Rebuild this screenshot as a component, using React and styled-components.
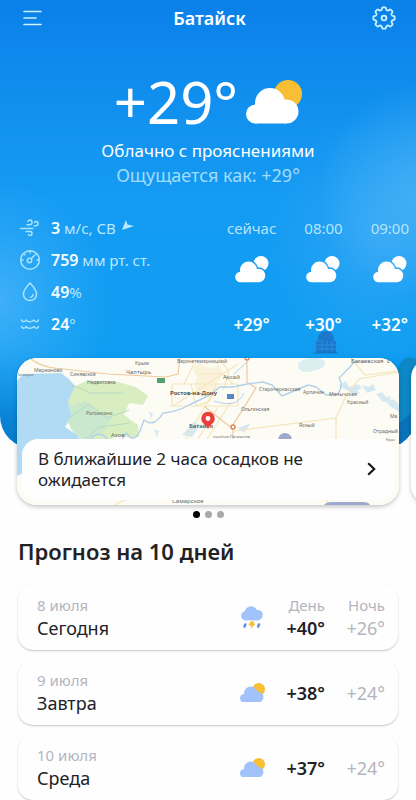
import React, { useState } from 'react'
import styled, { createGlobalStyle } from 'styled-components'

const GlobalStyle = createGlobalStyle`
  html {
    scrollbar-width: none;
  }

  body {
    margin: 0;
    background: #fefefe;
    font-family: 'Noto Sans', 'Open Sans', sans-serif;
    color: #222226;
  }

  *, *::before, *::after {
    box-sizing: border-box;
  }

  button {
    border: 0;
    padding: 0;
    background: none;
    font: inherit;
    color: inherit;
    cursor: pointer;
  }

  svg {
    display: block;
    flex: none;
  }
`

const Page = styled.main`
  overflow: hidden;
  padding-bottom: 16px;
`

const Hero = styled.section`
  position: relative;
  overflow: hidden;
  padding-bottom: 107px;
  border-radius: 0 0 32px 32px;
  color: #fff;
  background:
    radial-gradient(120px 110px at 105% 190px, rgba(110, 195, 248, 0.5), rgba(110, 195, 248, 0.25) 50%, rgba(110, 195, 248, 0)),
    radial-gradient(110px 130px at 90% 240px, rgba(90, 180, 248, 0.4), rgba(90, 180, 248, 0.12) 60%, rgba(90, 180, 248, 0)),
    radial-gradient(120px 120px at -2% 300px, rgba(100, 190, 252, 0.6), rgba(100, 190, 252, 0.25) 50%, rgba(100, 190, 252, 0)),
    linear-gradient(180deg, #0a80e9 0, #1191ef 110px, #149bf3 200px, #0f9ef2 350px, #0a93e6 375px, #0879c9 448px);
`

const Landscape = styled.svg`
  position: absolute;
  right: 0;
  bottom: 0;
`

const Header = styled.header`
  display: flex;
  align-items: center;
  justify-content: space-between;
  height: 36px;
  padding: 0 20px 0 23px;
`

const City = styled.h1`
  margin: 0;
  font-size: 18px;
  line-height: 24px;
  font-weight: 600;
`

const IconButton = styled.button`
  display: flex;
  justify-content: ${({ $end }) => ($end ? 'flex-end' : 'flex-start')};
  width: 24px;
`

const Current = styled.div`
  display: flex;
  flex-direction: column;
  align-items: center;
  padding-top: 32px;
`

const CurrentTemp = styled.div`
  display: flex;
  align-items: center;
  gap: 8px;
  font-size: 58px;
  line-height: 68px;
`

const Condition = styled.p`
  margin: 3px 0 0;
  font-size: 17px;
  line-height: 24px;
`

const FeelsLike = styled.p`
  margin: 0;
  font-size: 18px;
  line-height: 24px;
  color: #a3dcfb;
`

const Details = styled.div`
  display: flex;
  justify-content: space-between;
  padding: 25px 7px 0 18px;
`

const ConditionList = styled.ul`
  display: flex;
  flex-direction: column;
  margin: 0;
  padding: 0;
  list-style: none;
`

const ConditionItem = styled.li`
  display: flex;
  align-items: center;
  gap: 9px;
  height: 32px;
  font-size: 15px;
  color: #b9e8fd;

  strong {
    font-size: 16px;
    font-weight: 600;
    color: #f4fdff;
  }
`

const WindArrow = styled.svg`
  display: inline-block;
  margin-left: 6px;
  vertical-align: 3px;
`

const HourList = styled.ol`
  display: flex;
  gap: 28px;
  margin: 0;
  padding: 0;
  list-style: none;
`

const Hour = styled.li`
  display: flex;
  flex-direction: column;
  align-items: center;
  font-size: 15px;
  line-height: 32px;
  color: #b5e4fd;

  svg {
    margin: 12px 0 26px;
  }

  strong {
    font-size: 17px;
    font-weight: 600;
    color: #f4fdff;
  }
`

const Carousel = styled.div`
  position: relative;
  display: flex;
  gap: 12px;
  margin-top: -90px;
  padding: 0 17px;
`

const MapCard = styled.article`
  position: relative;
  display: flex;
  flex: 0 0 100%;
  align-items: flex-end;
  min-height: 147px;
  padding: 5px;
  border-radius: 20px;
  overflow: hidden;
  background: #fff;
  box-shadow: 0 2px 4px rgba(0, 0, 0, 0.22);
`

const MapDrawing = styled.svg`
  position: absolute;
  inset: 0;
  width: 100%;
  height: 100%;
  font-family: 'Noto Sans', sans-serif;
`

const Notice = styled.button`
  position: relative;
  display: flex;
  flex: 1;
  align-items: center;
  justify-content: space-between;
  padding: 9px 18px 10px 16px;
  border-radius: 16px;
  background: #fefefe;
  font-size: 17px;
  line-height: 21px;
  text-align: left;
`

const NoticeText = styled.span`
  max-width: 270px;
`

const Dots = styled.div`
  display: flex;
  justify-content: center;
  gap: 5px;
  padding-top: 6px;
`

const Dot = styled.button`
  width: 7px;
  height: 7px;
  border-radius: 50%;
  background: ${({ $active }) => ($active ? '#000' : '#a9a9a9')};
`

const Forecast = styled.section`
  padding: 17px 18px 0;
`

const ForecastTitle = styled.h2`
  margin: 0 0 18px;
  font-size: 22px;
  line-height: 32px;
  font-weight: 600;
`

const DayList = styled.ul`
  display: flex;
  flex-direction: column;
  gap: 10px;
  margin: 0;
  padding: 0;
  list-style: none;
`

const DayCard = styled.li`
  display: flex;
  align-items: center;
  height: 65px;
  padding: 0 13px 0 19px;
  border-radius: 15px;
  background: #fefefe;
  box-shadow: 0 1px 2px rgba(0, 0, 0, 0.22);
`

const DayName = styled.div`
  flex: 1;
  font-size: 18px;
  line-height: 24px;
`

const Muted = styled.div`
  font-size: 15px;
  line-height: 21px;
  color: #b4b5c0;
`

const DayIcon = styled.div`
  display: flex;
  justify-content: center;
  width: 26px;
`

const DayTemp = styled.div`
  width: 60px;
  text-align: right;
  font-size: 18px;
  line-height: 24px;
  font-weight: ${({ $night }) => ($night ? 400 : 600)};
  color: ${({ $night }) => ($night ? '#b4b5c0' : '#222226')};

  ${Muted} {
    font-weight: 400;
  }
`

const hours = [
  { time: 'сейчас', temp: '+29°' },
  { time: '08:00', temp: '+30°' },
  { time: '09:00', temp: '+32°' },
]

const days = [
  { date: '8 июля', name: 'Сегодня', day: '+40°', night: '+26°', storm: true, labels: true },
  { date: '9 июля', name: 'Завтра', day: '+38°', night: '+24°' },
  { date: '10 июля', name: 'Среда', day: '+37°', night: '+24°' },
]

const slides = ['Карта осадков', 'Слайд 2', 'Слайд 3']

// Eight rounded teeth, sampled around the circle
const gearPoints = Array.from({ length: 160 }, (_, i) => {
  const angle = (i / 160) * Math.PI * 2
  const radius = 9.5 + 1.2 * Math.tanh(2.5 * Math.cos(8 * angle) + 0.5)
  return `${(12 + radius * Math.sin(angle)).toFixed(2)},${(12 - radius * Math.cos(angle)).toFixed(2)}`
}).join(' ')

const MenuIcon = () => (
  <svg width="19" height="16" viewBox="0 0 19 16" stroke="#c9f3ff" strokeWidth="1.6" strokeLinecap="round">
    <path d="M1 1.5h17M1 8h12M1 14.5h17" />
  </svg>
)

const GearIcon = () => (
  <svg width="24" height="24" viewBox="0 0 24 24" fill="none" stroke="#c9f3ff" strokeWidth="1.8" strokeLinejoin="round">
    <polygon points={ gearPoints } />
    <circle cx="12" cy="12" r="2.4" />
  </svg>
)

const PartlyCloudy = ({ width, cloud = '#fff' }) => (
  <svg width={ width } viewBox="0 0 56 44">
    <circle cx="42" cy="14" r="14" fill="#f8bf35" />
    <g fill={ cloud }>
      <circle cx="9.5" cy="34" r="9.5" />
      <circle cx="24" cy="23" r="15" />
      <circle cx="40.5" cy="31.5" r="12" />
      <path d="M9 24h31v19.5H9z" />
    </g>
  </svg>
)

const HourCloud = () => (
  <svg width="34" height="27" viewBox="0 0 34 27" fill="#fff">
    <mask id="cloud-gap">
      <path fill="#fff" d="M0 0h34v27H0z" />
      <g fill="#000">
        <circle cx="13.5" cy="14" r="9.8" />
        <circle cx="23.5" cy="19.5" r="8.3" />
      </g>
    </mask>
    <circle cx="26" cy="7.5" r="7.5" mask="url(#cloud-gap)" />
    <circle cx="5.5" cy="21" r="5.3" />
    <circle cx="13.5" cy="14" r="8.5" />
    <circle cx="23.5" cy="19.5" r="6.8" />
    <path d="M5.5 15h18v11.3h-18z" />
  </svg>
)

const StormIcon = () => (
  <svg width="22" height="23" viewBox="0 0 22 23">
    <g fill="#a2c2fb">
      <circle cx="4.7" cy="9.8" r="4.6" />
      <circle cx="10" cy="6.5" r="6.3" />
      <circle cx="16.5" cy="9" r="5.3" />
      <path d="M5 8h12v6.4H5z" />
    </g>
    <path d="M4.3 18.5l-.8 2M18 18.5l-.8 2" stroke="#5a94e6" strokeWidth="2.6" strokeLinecap="round" />
    <path d="M9.5 15.5h4l-1 2.3h2l-5 5.2 1-3.5h-3z" fill="#f8b92f" />
  </svg>
)

const WindIcon = () => (
  <svg width="24" height="24" viewBox="0 0 24 24" fill="none" stroke="#a9e4fd" strokeWidth="1.5" strokeLinecap="round">
    <path d="M10 5.5q.6-1.500 2-1.500 2 .1 2 2.300T12 8.700H9M16.500 6.500q.5-1 1.700-1 1.900.1 1.900 2.100t-2 2.200h-2M2.500 12.500H15M8 15.500h4q2 .1 2 2t-1.900 2q-1.300 0-1.700-1" />
  </svg>
)

const PressureIcon = () => (
  <svg width="24" height="24" viewBox="0 0 24 24" fill="none" stroke="#a9e4fd" strokeWidth="1.5" strokeLinecap="round">
    <circle cx="12" cy="12" r="9.3" />
    <circle cx="11.5" cy="12.5" r="2.2" />
    <path d="M13.3 10.7l2.7-2.9M12 3v2M3 12h2M19 12h2M5.8 5.800l1 1M18.200 5.800l-1 1" />
  </svg>
)

const HumidityIcon = () => (
  <svg width="24" height="24" viewBox="0 0 24 24" fill="none" stroke="#a9e4fd" strokeWidth="1.5" strokeLinecap="round">
    <path d="M12 3c4 4.3 6.6 7.6 6.6 11a6.6 6.6 0 0 1-13.2 0C5.4 10.6 8 7.3 12 3z" />
    <path d="M15 14.5a3.2 3.2 0 0 1-2.2 2.7" />
  </svg>
)

const WaterIcon = () => (
  <svg width="24" height="24" viewBox="0 0 24 24" fill="none" stroke="#a9e4fd" strokeWidth="1.5" strokeLinecap="round" strokeLinejoin="round">
    <path d="M3.5 8c1 2.3 3.5 2.3 4.7 0 1 2.3 6.3 2.3 7.6 0 1.2 2.3 3.7 2.3 4.7 0M3.5 14.5c1 2.3 3.5 2.3 4.7 0 1 2.3 6.3 2.3 7.6 0 1.2 2.3 3.7 2.3 4.7 0" />
  </svg>
)

const ChevronIcon = () => (
  <svg width="9" height="14" viewBox="0 0 9 14" fill="none" stroke="#18181b" strokeWidth="2.2">
    <path d="M1.2 1.2L7.2 7l-6 5.8" />
  </svg>
)

// Lighthouse and the hill that stick out from behind the map card
const HeroLandscape = () => (
  <Landscape width="110" height="120" viewBox="0 0 110 120" aria-hidden="true">
    <path d="M92 120V40q7-16 18-8v88z" fill="#0d87c6" />
    <path d="M92 96l18-14v38H92z" fill="#0b72ba" />
    <g opacity="0.7">
      <path d="M12 10q1-7 8-7t8 7v3h2v12H10V13h2z" fill="#1f68bd" />
      <path d="M6 13h10M6 17h26M6 21h26M16 13v10M21 13v10M26 13v10" stroke="#3c86d2" fill="none" />
      <path d="M7 25h25" stroke="#1b60b0" fill="none" />
    </g>
  </Landscape>
)

const places = [
  [34, 371.5, 'Мержаново', 5],
  [17, 376, 'Таганрог', 4],
  [70, 376, 'Синявское', 5],
  [87, 384, 'Недвиговка', 5],
  [135, 365, 'Крым', 5],
  [126, 373.5, 'Чалтырь', 6],
  [177, 363, 'Верхнетемерницкий', 5],
  [223, 378.5, 'Аксай', 6],
  [86, 415, 'Рогожкино', 5],
  [111, 437, 'Азов', 6],
  [351, 363, 'Багаевская', 6],
  [387, 363, 'Е', 6],
  [259, 390.5, 'Старочеркасская', 5],
  [303, 394, 'Арпачин', 5],
  [329, 396, 'Манычская', 5],
  [347, 404, 'Красный', 5],
  [241, 410.5, 'Ольгинская', 5],
  [299, 427, 'Ясный', 5],
  [373, 433, 'Отрадный', 5],
  [386, 441, 'Крас', 4],
  [390, 418, 'Ма', 5],
  [213, 438, 'посёлок Пятихатки', 4],
  [172, 503, 'Самарское', 6],
]

const RegionMap = () => (
  <MapDrawing viewBox="17 358 382 147" preserveAspectRatio="xMidYMid slice" role="img" aria-label="Карта осадков">
    <path d="M17 358h382v147H17z" fill="#fdfcf4" />
    <path d="M86 381l28 0 22 6 12 9-5 9-14-2-5 12 14 10 1 12-22-1-9 5H84l-18-20 0-30z" fill="#d9eec0" />
    <path d="M68 407l18-6 12 12 14 4-8 13-16 11H78l-8-14z" fill="#c4e6cf" opacity="0.8" />
    <path d="M17 505V381l6-7 38-1 8 6 6 7-7 15 3 15-6 11 13 9 2 10-42 20-21 10z" fill="#b1dbf4" />
    <path d="M66 382l24 11 33 0M69 418l20-14 18 14 22-8M84 440l16-13 30-4" stroke="#b3dac6" fill="none" />
    <path d="M298 363q15-10 27-2 2 7-12 10-16 4-15-8z" fill="#dceef0" />
    <g fill="#bddcf2" opacity="0.6">
      <path d="M338 386l8-5 3 6 9-3 4 4-9 5zM362 385l7 2 4-3 3 6-9 3zM350 391l6-2 4 4-8 2z" />
      <path d="M376 394l6-2 4 5 4-1 1 5-8 1zM386 402l7-3 6 5v8l-8-5z" />
      <path d="M182 435l12-13 6 3-8 12zM238 428l13-5-7 10zM149 411l4 3-2 5zM154 429l5 2-2 6z" />
    </g>
    {/* roads */}
    <g fill="none" stroke="#f4e4ba" strokeWidth="1.2">
      <path d="M172 384h66M172 384v22h66v-22M191 384l5 22 14-5 6-17M173 406l65-42M194 364l-10 20M198 374h25l10 10M219 358l10 14-6 18M186 439l28-48M198 439l20-32M207 439l24-37" />
      <path d="M234 431l102-13 10-22 13-17 40-7M336 418v22M351 358l14 17 34-4M194 442l-10 30-70 33M330 505l-30-40" />
    </g>
    <g fill="none" stroke="#eec9a0" strokeWidth="1.2">
      <path d="M30 358q9 8 24 10l54 6 58 3 12-3 2-16M247 358v24l9 6-23 37v14M205 407l28 22" />
    </g>
    <path d="M197 376q-9-8 2-13 13 9 20 1 8 12-2 18 4 16-14 15-12-6-6-21z" fill="#f8ebca" opacity="0.6" />
    {/* rivers */}
    <g fill="none" stroke="#b3d0ea" strokeWidth="1.4" strokeLinejoin="round">
      <path d="M90 439q10-10 18 1t18-7q8 11 14-2l4-11q10 8 19-7 14-1 26-8l19-9 12-9 13 0 14-3 16-2 9 3 10 11 26-11 8 2 10 8 12-1q6-9 1-16l11-11 4-5 11 0" />
      <path d="M234 374l13-12M214 401q23 8 30-8" strokeWidth="1" />
    </g>
    <path d="M278 440a7 7 0 0 1 14 0z" fill="#9fa9cf" />
    <path d="M324 505q2-3 8-3h30q7 0 8 3z" fill="#9fa9cf" />
    <path d="M157 378h8v5h-8z" fill="#52a16e" />
    <path d="M227 394h7v5h-7z" fill="#5685c8" />
    <g fill="#fff" stroke="#dc8b56" strokeWidth="1.5">
      <circle cx="247" cy="358" r="2" />
      <circle cx="233" cy="427" r="2" />
    </g>
    <g fill="#6b6b6b">
      { places.map(([x, y, name, size]) => (
        <text key={ name + y } x={ x } y={ y } fontSize={ size }>{ name }</text>
      )) }
    </g>
    <text x="170" y="395" fontSize="6" fontWeight="600" fill="#3a3a3a">Ростов-на-Дону</text>
    <text x="189" y="428" fontSize="6" fontWeight="600" fill="#555">Батайск</text>
    <path d="M208 429q-1-3-4-5a6.800 6.800 0 1 1 8 0q-3 2-4 5z" fill="#ea3f3b" />
    <circle cx="208" cy="418.5" r="2.4" fill="#fff" />
  </MapDrawing>
)

const conditions = [
  { icon: <WindIcon />, value: '3', unit: ' м/с, СВ', arrow: true },
  { icon: <PressureIcon />, value: '759', unit: ' мм рт. ст.' },
  { icon: <HumidityIcon />, value: '49', unit: '%' },
  { icon: <WaterIcon />, value: '24', unit: '°' },
]

export default function App() {
  const [active, setActive] = useState(0)

  return (
    <Page>
      <GlobalStyle />
      <Hero>
        <HeroLandscape />
        <Header>
          <IconButton aria-label="Меню"><MenuIcon /></IconButton>
          <City>Батайск</City>
          <IconButton $end aria-label="Настройки"><GearIcon /></IconButton>
        </Header>
        <Current>
          <CurrentTemp>
            <span>+29°</span>
            <PartlyCloudy width="56" />
          </CurrentTemp>
          <Condition>Облачно с прояснениями</Condition>
          <FeelsLike>Ощущается как: +29°</FeelsLike>
        </Current>
        <Details>
          <ConditionList>
            { conditions.map(({ icon, value, unit, arrow }) => (
              <ConditionItem key={ value }>
                { icon }
                <span>
                  <strong>{ value }</strong>{ unit }
                  { arrow && (
                    <WindArrow width="12" height="11" viewBox="0 0 12 11" fill="#b9e8fd">
                      <path d="M0 10L4 0l1.500 4.500L12 6z" />
                    </WindArrow>
                  ) }
                </span>
              </ConditionItem>
            )) }
          </ConditionList>
          <HourList>
            { hours.map(({ time, temp }) => (
              <Hour key={ time }>
                <span>{ time }</span>
                <HourCloud />
                <strong>{ temp }</strong>
              </Hour>
            )) }
          </HourList>
        </Details>
      </Hero>

      <Carousel>
        <MapCard>
          <RegionMap />
          <Notice>
            <NoticeText>В ближайшие 2 часа осадков не ожидается</NoticeText>
            <ChevronIcon />
          </Notice>
        </MapCard>
        <MapCard />
      </Carousel>
      <Dots>
        { slides.map((label, i) => (
          <Dot key={ label } aria-label={ label } $active={ i === active } onClick={ () => setActive(i) } />
        )) }
      </Dots>

      <Forecast>
        <ForecastTitle>Прогноз на 10 дней</ForecastTitle>
        <DayList>
          { days.map(({ date, name, day, night, storm, labels }) => (
            <DayCard key={ date }>
              <DayName>
                <Muted>{ date }</Muted>
                { name }
              </DayName>
              <DayIcon>
                { storm ? <StormIcon /> : <PartlyCloudy width="25" cloud="#a2c2fb" /> }
              </DayIcon>
              <DayTemp>
                { labels && <Muted>День</Muted> }
                { day }
              </DayTemp>
              <DayTemp $night>
                { labels && <Muted>Ночь</Muted> }
                { night }
              </DayTemp>
            </DayCard>
          )) }
        </DayList>
      </Forecast>
    </Page>
  )
}
